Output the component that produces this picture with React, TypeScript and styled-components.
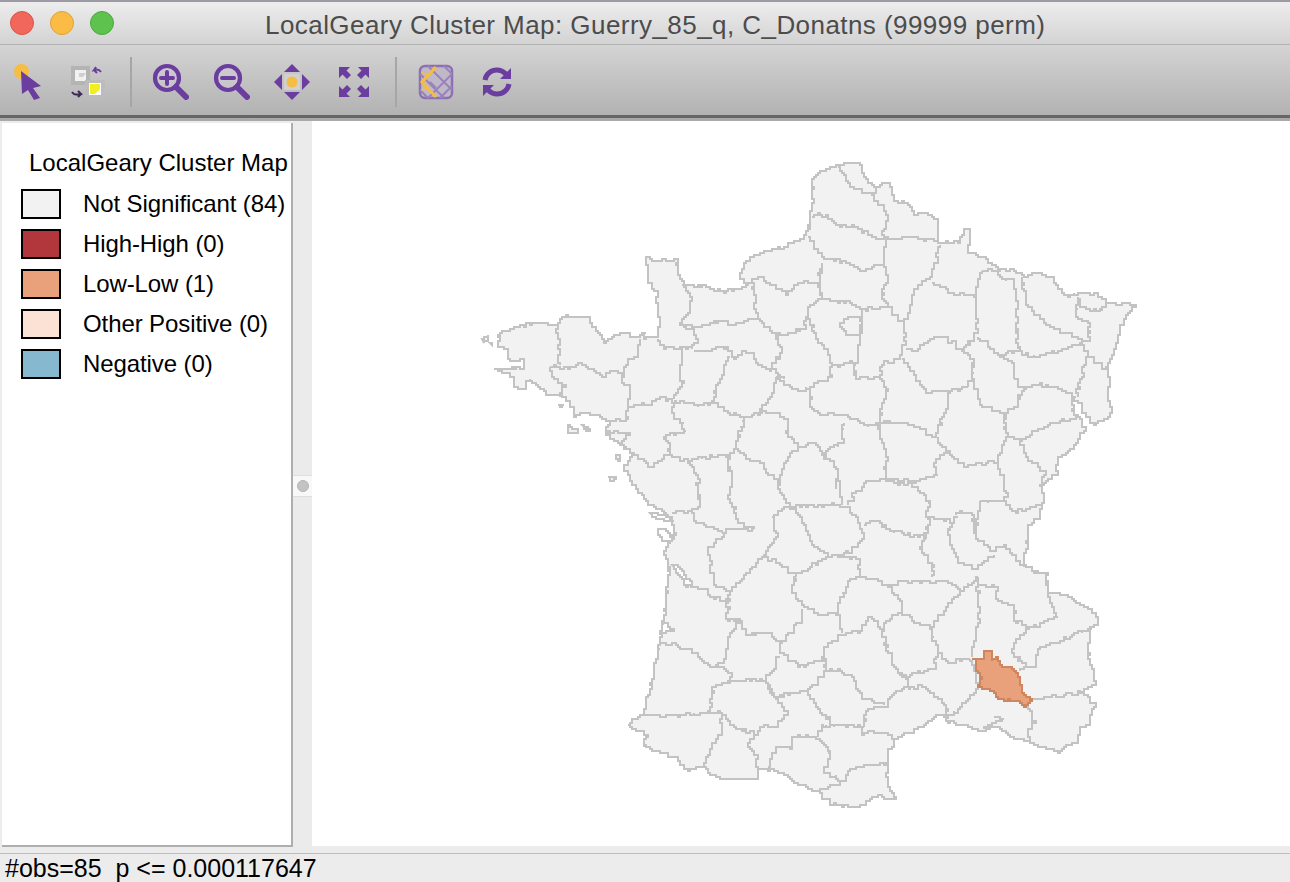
import React from "react";
import styled, { createGlobalStyle } from "styled-components";

type Pts = number[];

const OUTLINE: Pts = [645,257,652,262,677,261,678,275,683,285,700,287,723,293,737,290,748,283,740,278,745,262,760,253,783,248,803,238,809,227,810,218,813,200,813,178,820,172,840,165,859,163,863,177,873,188,886,183,892,190,893,202,908,203,913,215,928,215,937,222,938,243,957,243,963,232,970,229,968,253,985,260,997,270,1013,272,1023,277,1037,274,1052,278,1058,290,1067,297,1078,294,1097,295,1105,303,1135,307,1120,330,1115,350,1108,372,1110,387,1107,400,1112,413,1107,420,1095,425,1083,413,1082,403,1072,400,1073,415,1080,420,1085,432,1073,450,1057,462,1057,475,1045,483,1042,490,1043,503,1040,520,1028,527,1027,550,1023,563,1033,573,1047,575,1048,593,1067,597,1080,605,1095,615,1098,625,1090,633,1088,653,1095,685,1083,693,1095,707,1090,725,1080,730,1077,743,1060,753,1040,747,1030,742,1013,738,1000,728,983,732,970,727,947,722,942,715,923,727,897,740,888,757,887,770,888,788,895,800,877,797,860,808,833,805,817,792,797,783,780,773,767,770,758,770,758,780,745,780,722,780,703,768,690,772,677,758,643,747,647,735,627,725,642,715,650,690,660,643,665,607,670,567,665,555,668,543,675,533,672,517,650,505,637,490,623,467,633,455,605,433,610,422,588,413,575,417,573,407,565,398,550,395,530,380,525,390,515,388,513,377,498,370,523,368,523,360,510,362,507,350,498,348,500,333,517,328,538,323,557,327,562,318,590,317,592,327,603,343,622,333,633,338,645,333,643,340,658,338,660,323,658,310,658,295,648,280,648,265];

const BORDERS: Pts[] = [
  [558,327,558,347,560,365],
  [550,368,570,368,582,365,602,377,610,372,623,373],
  [550,368,553,380,565,387,560,398],
  [640,340,638,358,625,367,623,373,622,383,630,388,630,400,627,410,627,420,610,422],
  [658,340,663,350,682,348,692,350],
  [682,348,680,370,682,387,673,400],
  [627,408,650,405,660,398,672,402],
  [682,285,692,300,690,313,680,325,693,332,698,342,692,350],
  [680,325,697,328,715,323,733,325,757,318],
  [752,283,755,300,757,318],
  [748,283,760,278,785,295,803,282,817,285,822,298],
  [757,318,775,337,803,330,807,315],
  [775,337,782,353,772,370,783,380],
  [693,352,728,348,733,360,745,353,753,355,755,363,772,372],
  [730,357,720,383,712,403],
  [673,402,697,407,712,403,730,415,745,418,760,413],
  [775,378,772,397,760,413,772,413,787,420,788,437,800,448,785,463,778,490],
  [775,378,797,392,810,388],
  [745,418,735,450],
  [605,433,630,435,622,445,637,460,652,467,667,455,670,443,663,437,685,432,683,423,673,417,672,402],
  [667,455,687,462,727,455,735,450],
  [688,462,698,480,700,507,692,513,693,522,722,533],
  [672,513,692,512],
  [727,455,732,483,728,497,735,510,737,523,753,530],
  [722,533,727,530,753,530],
  [735,450,747,460,760,463,777,483,780,493,790,508,772,518,777,538,763,558,740,583,730,595],
  [727,530,722,540,707,552,713,585,730,593],
  [690,587,707,590,710,598,728,602,730,593],
  [728,602,727,622,742,622,733,632,727,643,725,660,718,667],
  [660,643,690,650,710,668,718,667,732,677,728,683,713,688,710,713],
  [642,715,660,717,710,713,720,713,722,733,707,757,703,768],
  [728,683,760,680,767,687,775,700,788,715,777,727,762,728,748,747,757,757,757,770],
  [720,713,733,728,753,735],
  [742,623,745,635,767,633,780,643,802,620,802,610],
  [763,558,780,565,795,577,827,557],
  [790,508,802,520,812,545,827,557,833,555,852,552,863,538,860,523,847,508,840,505,802,508,790,508],
  [833,556,858,560,860,577,850,582,837,613,842,633],
  [795,577,792,593,803,608,820,615,837,613],
  [780,643,780,653,797,667,825,660,823,650,842,635,860,632,868,617,877,623,885,643,893,667,907,683,907,688,887,700,887,707,867,712,863,727],
  [780,657,772,673,765,680,773,698,805,692,827,672,825,660],
  [805,692,820,713,833,727],
  [767,767,778,747,790,750,795,737,815,738,830,753,828,767,823,773,843,782],
  [823,725,817,737],
  [822,727,863,727,862,735,877,733,897,740],
  [817,792,843,782,850,770,877,765,887,768],
  [827,672,837,670,853,680,862,700,883,705],
  [860,577,888,587,905,582,932,583,945,582,960,592,977,577],
  [888,587,902,603,902,613,885,623,882,637],
  [902,613,913,623,930,628,960,592],
  [930,628,937,653,935,670,910,677,898,673],
  [937,653,948,663,970,660],
  [907,690,922,687,942,703,948,712,945,717],
  [970,660,975,677,977,690,960,710,948,720],
  [812,217,820,215,840,227,853,227,872,238,888,240,913,238,937,242],
  [838,167,850,188,872,195,875,187],
  [872,195,883,210,888,222,882,235,888,240,883,265,888,283,882,300,888,308,903,325],
  [807,237,822,258,840,263,863,272,883,265],
  [940,245,932,278,915,290,908,320,903,325,905,345,900,360,883,365,880,378],
  [821,263,820,283,822,298,807,313,815,337,830,358,832,377,810,388,810,407,820,415,843,415,867,427,880,423,880,410,888,390,880,378],
  [822,300,843,303,863,310,887,308],
  [862,310,858,363,832,368],
  [855,365,855,380,880,378],
  [902,360,913,375,925,393,947,393,967,387],
  [880,423,907,425,935,438,947,403,947,393],
  [905,350,917,350,937,337,947,340,960,350,973,340],
  [960,350,973,363,973,382,967,387],
  [932,283,953,295,975,297,977,333,973,340],
  [982,272,975,297],
  [982,272,997,270],
  [1000,270,1000,278,1013,283,1018,307,1017,347,1018,350],
  [977,337,1000,357,1020,350],
  [1022,278,1027,307,1043,323,1053,330,1082,342,1090,340,1090,323,1075,317,1078,297],
  [1017,348,1027,358,1058,352,1082,343,1083,350,1087,357,1077,397],
  [1078,300,1080,308,1102,312,1105,303],
  [1087,357,1107,372],
  [1013,380,1023,390,1037,385,1057,390,1075,397],
  [1002,357,1013,367,1013,380],
  [973,382,982,408,1003,415,1015,407,1023,390],
  [1003,415,1007,438,997,463,967,467,947,452,937,438],
  [1007,438,1020,442,1043,428,1078,417],
  [1020,442,1025,458,1045,475,1040,488],
  [997,463,1003,480,1007,497,1003,502,1015,513,1042,505],
  [885,480,913,483,937,475,933,463,947,452],
  [835,490,838,470,822,453,842,443,843,423],
  [800,447,813,443,822,453],
  [877,423,880,437,887,462,885,480,868,482,848,505],
  [837,480,842,505],
  [883,480,897,485,915,487,930,503,925,518,952,523],
  [863,525,877,522,890,532,917,537,925,540,920,550,933,568,932,578],
  [930,520,925,540],
  [957,517,948,535,957,563,975,570,993,555],
  [980,502,975,538,993,552,1003,545,1023,568],
  [980,502,1003,502],
  [955,515,972,513,975,538],
  [977,585,997,588,997,602,1013,605,1015,623,1030,628,1057,617,1052,603,1048,593],
  [977,577,977,587,980,613,972,658],
  [1030,630,1013,648,1013,657,1025,667],
  [1092,630,1058,643,1040,650,1035,667,1020,672],
  [1032,700,1060,697,1082,692],
  [1030,702,1028,710,1035,723,1028,737,1030,742],
  [993,717,1003,720,983,730],
];

const ENCLAVE: Pts = [862,318,850,318,840,327,845,335,860,337];
const HOLES: Pts[] = [
  [672,566,678,568,691,585,688,588,680,575],
  [663,623,673,632,660,635],
  [657,530,664,530,673,540,672,542,663,542],
  [650,513,668,518,670,522,655,518],
];
const ISLANDS: Pts[] = [
  [482,339,488,336,488,342,483,343],
  [490,343,492,344,491,346],
  [493,370,497,370],
  [568,425,571,430,578,431,577,433,569,433],
  [582,425,590,431,588,432],
  [557,405,563,406,562,408],
  [615,455,620,458,620,462,617,460],
  [608,477,615,479,613,481],
];
const VAUCLUSE: Pts = [971,660,977,659,975,670,982,680,977,688,993,693,997,700,1017,702,1023,707,1032,700,1022,693,1020,677,1012,668,1000,665,998,658,992,662,992,652,985,652,983,660,978,659];

function noise(i: number): number {
  const s = Math.sin(i * 12.9898) * 43758.5453;
  return s - Math.floor(s) - 0.5;
}

const snap = (v: number) => Math.round(v / 2) * 2;

function rough(p: Pts, seed: number, closed: boolean, amp = 2.2): string {
  const src = closed ? [...p, p[0], p[1]] : p;
  const out: string[] = [];
  let k = seed * 97;
  let px = NaN;
  let py = NaN;
  const add = (x: number, y: number) => {
    if (!isNaN(px) && x !== px && y !== py) out.push(`${x} ${py}`);
    out.push(`${x} ${y}`);
    px = x;
    py = y;
  };
  for (let i = 0; i + 3 < src.length; i += 2) {
    const [x0, y0, x1, y1] = [src[i], src[i + 1], src[i + 2], src[i + 3]];
    const n = Math.max(1, Math.round(Math.hypot(x1 - x0, y1 - y0) / 3));
    for (let j = 0; j < n; j++) {
      const t = j / n;
      const a = j === 0 ? 0 : amp;
      add(snap(x0 + (x1 - x0) * t + noise(k++) * a), snap(y0 + (y1 - y0) * t + noise(k++) * a));
    }
  }
  if (!closed) add(snap(src[src.length - 2]), snap(src[src.length - 1]));
  return "M" + out.join("L") + (closed ? "Z" : "");
}

const Global = createGlobalStyle`
  html, body { margin: 0; padding: 0; background: #ececec; }
  body { font-family: "Liberation Sans", Arial, sans-serif; overflow: hidden; }
`;

const Windowed = styled.div`
  width: 1290px;
  height: 882px;
  display: flex;
  flex-direction: column;
  overflow: hidden;
  background: #ececec;
`;
const BehindStrip = styled.div`
  height: 2px;
  flex: none;
  background: #9d9aa3;
`;
const TitleBar = styled.div`
  height: 43px;
  flex: none;
  display: flex;
  align-items: center;
  position: relative;
  box-sizing: border-box;
  padding-left: 10px;
  gap: 16px;
  background: linear-gradient(#ededed, #d3d3d3);
  border-bottom: 1px solid #b3b3b3;
`;
const Light = styled.span<{ $c: string; $b: string }>`
  width: 24px;
  height: 24px;
  box-sizing: border-box;
  border-radius: 50%;
  background: ${(p) => p.$c};
  border: 1px solid ${(p) => p.$b};
`;
const Title = styled.div`
  position: absolute;
  left: 265px;
  top: 8px;
  font-size: 26px;
  line-height: 30px;
  color: #4c4c4c;
  white-space: nowrap;
  letter-spacing: 0.44px;
`;
const Toolbar = styled.div`
  height: 70px;
  flex: none;
  display: flex;
  align-items: center;
  box-sizing: border-box;
  padding: 4px 0 0 13px;
  background: linear-gradient(#d4d4d4, #b2b2b2);
`;
const ToolIcon = styled.svg<{ $m: number }>`
  flex: none;
  margin-left: ${(p) => p.$m}px;
  filter: blur(0.6px);
`;
const Separator = styled.div<{ $m: number }>`
  width: 2px;
  height: 50px;
  flex: none;
  margin-left: ${(p) => p.$m}px;
  background: #a6a6a6;
`;
const ToolbarRule = styled.div`
  height: 3px;
  flex: none;
  background: #666666;
`;
const RuleLight = styled.div`
  height: 3px;
  flex: none;
  background: #a9a9a9;
`;
const Main = styled.div`
  flex: 1;
  min-height: 0;
  display: flex;
`;
const LegendPanel = styled.div`
  width: 291px;
  height: 724px;
  margin: 2px 0 0 2px;
  flex: none;
  box-sizing: border-box;
  background: #ffffff;
  border-right: 2px solid #aeaeae;
  border-bottom: 2px solid #aeaeae;
  overflow: hidden;
  padding: 26px 0 0 19px;
`;
const LegendTitle = styled.div`
  margin-left: 8px;
  width: 260px;
  overflow: hidden;
  font-size: 24px;
  line-height: 28px;
  color: #000;
  white-space: nowrap;
  margin-bottom: 13px;
`;
const LegendRows = styled.div`
  display: flex;
  flex-direction: column;
  gap: 12px;
`;
const LegendRow = styled.div`
  display: flex;
  align-items: center;
  gap: 22px;
  height: 28px;
  font-size: 24px;
  letter-spacing: -0.1px;
  color: #000;
  white-space: nowrap;
`;
const Swatch = styled.span<{ $c: string }>`
  width: 40px;
  height: 30px;
  box-sizing: border-box;
  flex: none;
  background: ${(p) => p.$c};
  border: 2px solid #000;
`;
const Sash = styled.div`
  width: 19px;
  flex: none;
  display: flex;
  align-items: center;
  background: #ebebeb;
  padding-bottom: 3px;
  box-sizing: border-box;
`;
const SashGrip = styled.div`
  width: 100%;
  height: 20px;
  display: flex;
  align-items: center;
  justify-content: center;
  background: #f8f8f8;
  border-top: 1px solid #dedede;
  border-bottom: 1px solid #dedede;
`;
const SashDot = styled.span`
  width: 12px;
  height: 12px;
  border-radius: 50%;
  background: #c3c3c3;
  border: 1px solid #b5b5b5;
  box-sizing: border-box;
`;
const MapArea = styled.div`
  flex: 1;
  height: 725px;
  background: #ffffff;
`;
const MapSvg = styled.svg`
  display: block;
  filter: blur(0.4px);
`;
const StatusBar = styled.div`
  height: 29px;
  flex: none;
  box-sizing: border-box;
  border-top: 1px solid #bdbdbd;
  padding-left: 5px;
  font-size: 25px;
  line-height: 29px;
  color: #000;
  white-space: pre;
  background: #ececec;
`;

const P = "#6a3d9f";
const Y = "#f5bd41";

const legend = [
  { c: "#f2f2f2", t: "Not Significant (84)" },
  { c: "#b2373c", t: "High-High (0)" },
  { c: "#e9a17c", t: "Low-Low (1)" },
  { c: "#fbe2d5", t: "Other Positive (0)" },
  { c: "#86b8cf", t: "Negative (0)" },
];

const Magnifier = ({ plus, m }: { plus: boolean; m: number }) => (
  <ToolIcon $m={m} width="38" height="38" viewBox="0 0 38 38">
    <circle cx="15" cy="15" r="12" fill="#cfc9d6" fillOpacity="0.5" stroke={P} strokeWidth="4.2" />
    <path d="M24 24L34 34" stroke={P} strokeWidth="6" strokeLinecap="round" />
    <path d={plus ? "M9 15H21M15 9V21" : "M9 15H21"} stroke={P} strokeWidth="4" strokeLinecap="round" />
  </ToolIcon>
);

export default function App() {
  return (
    <Windowed>
      <Global />
      <BehindStrip />
      <TitleBar>
        <Light $c="#f2675c" $b="#d9534a" />
        <Light $c="#fbbc46" $b="#dfa037" />
        <Light $c="#5ec24f" $b="#4ca83f" />
        <Title>LocalGeary Cluster Map: Guerry_85_q, C_Donatns (99999 perm)</Title>
      </TitleBar>
      <Toolbar>
        <ToolIcon $m={0} width="30" height="38" viewBox="0 0 30 38">
          <circle cx="8.5" cy="8.5" r="7.5" fill={Y} />
          <path d="M8 8L28 23L20 25L27 35L21 37L15 27L9 31Z" fill={P} />
        </ToolIcon>
        <ToolIcon $m={27} width="36" height="34" viewBox="0 0 36 34">
          <rect x="1" y="1" width="19" height="19" fill="#b4b4b4" />
          <rect x="5" y="5" width="11" height="11" fill="#f1f1f1" />
          <path d="M9 8H16L13 12H9Z" fill="#cfcfcf" />
          <rect x="15" y="15" width="20" height="19" fill="#bcbcbc" />
          <rect x="19" y="18" width="12" height="12" fill="#fafafa" />
          <path d="M20 19H30V24L25 29H20Z" fill="#f3ee1f" />
          <path d="M31 7C29 4 27 4 24 5L26 2M24 5L27 8" stroke={P} strokeWidth="2" fill="none" />
          <path d="M2 27C4 30 6 30 11 29L8 26M11 29L8 32" stroke="#3c2a55" strokeWidth="2" fill="none" />
        </ToolIcon>
        <Separator $m={24} />
        <Magnifier plus m={20} />
        <Magnifier plus={false} m={23} />
        <ToolIcon $m={22} width="38" height="38" viewBox="0 0 38 38">
          <path d="M19 1L27 9H11ZM19 37L11 29H27ZM1 19L9 11V27ZM37 19L29 27V11Z" fill={P} />
          <rect x="11" y="11" width="16" height="16" fill="#d0d0d0" />
          <circle cx="19" cy="19" r="5.5" fill={Y} />
        </ToolIcon>
        <ToolIcon $m={27} width="32" height="32" viewBox="0 0 32 32">
          <path d="M1 1H12L8.5 4.5L13 9L9 13L4.5 8.5L1 12ZM31 1V12L27.5 8.5L23 13L19 9L23.5 4.5L20 1ZM1 31V20L4.5 23.5L9 19L13 23L8.5 27.5L12 31ZM31 31H20L23.5 27.5L19 23L23 19L27.5 23.5L31 20Z" fill={P} />
        </ToolIcon>
        <Separator $m={25} />
        <ToolIcon $m={21} width="36" height="36" viewBox="0 0 36 36">
          <rect x="2" y="2" width="32" height="32" rx="5" fill="#bfb8c8" stroke="#8d6fb3" strokeWidth="2.5" />
          <path d="M10 2L34 26M26 2L34 10M2 26L10 34M34 10L10 34M22 34L34 22M2 10L26 34M16 8L22 14M12 18L18 24" stroke="#9a82ba" strokeWidth="2" fill="none" />
          <path d="M18 3L4 18L18 33" stroke={Y} strokeWidth="3.2" fill="none" />
          <path d="M3 8L12 12M3 26L11 24" stroke={Y} strokeWidth="1.5" fill="none" />
        </ToolIcon>
        <ToolIcon $m={27} width="32" height="32" viewBox="0 0 32 32">
          <path d="M4 14C5 8 10 4 16 4C20 4 23 6 25 8" fill="none" stroke={P} strokeWidth="5" />
          <path d="M30 2V13H19Z" fill={P} />
          <path d="M28 18C27 24 22 28 16 28C12 28 9 26 7 24" fill="none" stroke={P} strokeWidth="5" />
          <path d="M2 30V19H13Z" fill={P} />
        </ToolIcon>
      </Toolbar>
      <ToolbarRule />
      <RuleLight />
      <Main>
        <LegendPanel>
          <LegendTitle>LocalGeary Cluster Map:</LegendTitle>
          <LegendRows>
            {legend.map((l) => (
              <LegendRow key={l.t}>
                <Swatch $c={l.c} />
                {l.t}
              </LegendRow>
            ))}
          </LegendRows>
        </LegendPanel>
        <Sash>
          <SashGrip>
            <SashDot />
          </SashGrip>
        </Sash>
        <MapArea>
          <MapSvg width="978" height="725" viewBox="312 122 978 725">
            <g fill="#f2f2f2" stroke="#c3c3c3" strokeWidth="2" strokeLinejoin="miter">
              <path d={rough(OUTLINE, 1, true, 2.2)} />
              <path d={rough(ENCLAVE, 2, true, 1.2)} fill="none" />
              {ISLANDS.map((p, i) => (
                <path key={i} d={rough(p, 10 + i, true, 0.8)} />
              ))}
              {BORDERS.map((p, i) => (
                <path key={i} d={rough(p, 30 + i, false, 3)} fill="none" />
              ))}
              {HOLES.map((p, i) => (
                <path key={i} d={rough(p, 200 + i, true, 0.8)} fill="#ffffff" />
              ))}
              <path d={rough(VAUCLUSE, 300, true, 1.2)} fill="#e9a17c" stroke="#cd8660" />
            </g>
          </MapSvg>
        </MapArea>
      </Main>
      <StatusBar>{"#obs=85  p <= 0.000117647"}</StatusBar>
    </Windowed>
  );
}
